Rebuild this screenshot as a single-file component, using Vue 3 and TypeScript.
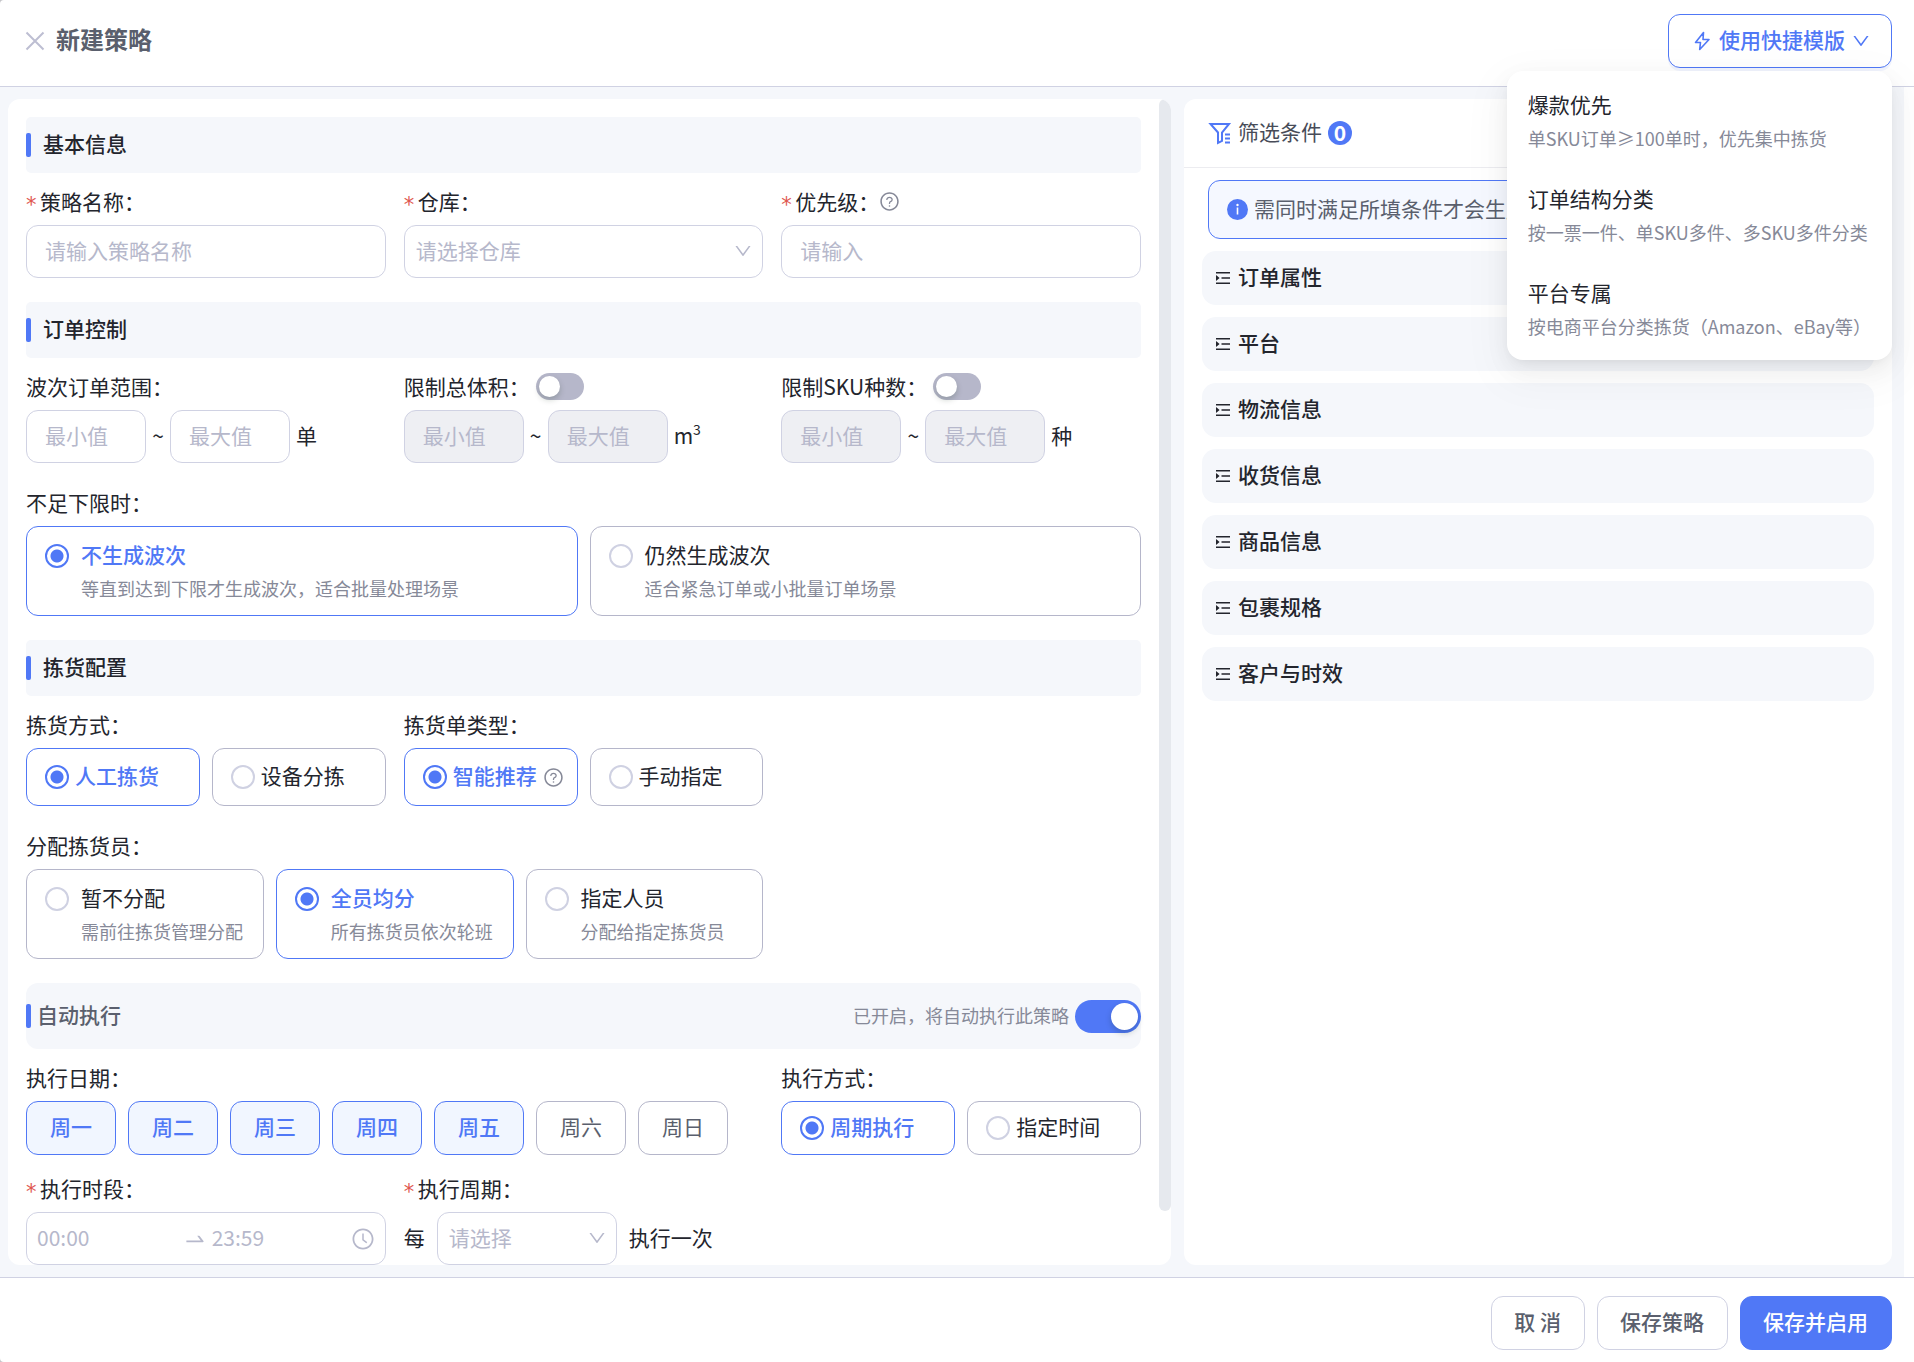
<script setup lang="ts">
import { ref } from 'vue'

interface Choice {
  value: string
  title: string
  desc?: string
  hint?: boolean
}

const shortfall = ref('skip')
const shortfallOptions: Choice[] = [
  { value: 'skip', title: '不生成波次', desc: '等直到达到下限才生成波次，适合批量处理场景' },
  { value: 'still', title: '仍然生成波次', desc: '适合紧急订单或小批量订单场景' },
]

const pickMode = ref('manual')
const pickModes: Choice[] = [
  { value: 'manual', title: '人工拣货' },
  { value: 'device', title: '设备分拣' },
]

const listType = ref('smart')
const listTypes: Choice[] = [
  { value: 'smart', title: '智能推荐', hint: true },
  { value: 'custom', title: '手动指定' },
]

const assign = ref('all')
const assignOptions: Choice[] = [
  { value: 'none', title: '暂不分配', desc: '需前往拣货管理分配' },
  { value: 'all', title: '全员均分', desc: '所有拣货员依次轮班' },
  { value: 'some', title: '指定人员', desc: '分配给指定拣货员' },
]

const runMode = ref('cycle')
const runModes: Choice[] = [
  { value: 'cycle', title: '周期执行' },
  { value: 'time', title: '指定时间' },
]

const limitVolume = ref(false)
const limitSku = ref(false)
const autoRun = ref(true)

const days = ref([
  { name: '周一', on: true },
  { name: '周二', on: true },
  { name: '周三', on: true },
  { name: '周四', on: true },
  { name: '周五', on: true },
  { name: '周六', on: false },
  { name: '周日', on: false },
])

const templates = [
  { title: '爆款优先', desc: '单SKU订单≥100单时，优先集中拣货' },
  { title: '订单结构分类', desc: '按一票一件、单SKU多件、多SKU多件分类' },
  { title: '平台专属', desc: '按电商平台分类拣货（Amazon、eBay等）' },
]
const menuOpen = ref(true)

const filters = ['订单属性', '平台', '物流信息', '收货信息', '商品信息', '包裹规格', '客户与时效']

const chevron =
  'M884 256h-75c-5.1 0-9.9 2.5-12.9 6.6L512 654.2 227.9 262.6c-3-4.1-7.8-6.6-12.9-6.6h-75c-6.5 0-10.3 7.4-6.5 12.7l352.6 486.1c12.8 17.6 39 17.6 51.7 0l352.6-486.1c3.9-5.3.1-12.7-6.4-12.7z'
const ring =
  'M512 64C264.6 64 64 264.6 64 512s200.6 448 448 448 448-200.6 448-448S759.4 64 512 64zm0 820c-205.4 0-372-166.6-372-372s166.6-372 372-372 372 166.6 372 372-166.6 372-372 372z'
const question =
  'M623.6 316.7C593.6 290.4 554 276 512 276s-81.6 14.5-111.6 40.7C369.2 344 352 380.7 352 420v7.6c0 4.4 3.6 8 8 8h48c4.4 0 8-3.6 8-8V420c0-44.1 43.1-80 96-80s96 35.9 96 80c0 31.1-22 59.6-56.1 72.7-21.2 8.1-39.2 22.3-52.1 40.9-13.1 19-19.9 41.8-19.9 64.9V620c0 4.4 3.6 8 8 8h48c4.4 0 8-3.6 8-8v-22.7a48.3 48.3 0 0130.9-44.8c59-22.7 97.1-74.7 97.1-132.5.1-39.3-17.1-76-48.3-103.3zM472 732a40 40 0 1080 0 40 40 0 10-80 0z'
const hands =
  'M686.7 638.6L544.1 535.5V288c0-4.4-3.6-8-8-8H488c-4.4 0-8 3.6-8 8v275.4c0 2.6 1.2 5 3.3 6.5l165.4 120.6c3.6 2.6 8.6 1.8 11.2-1.7l28.6-39c2.6-3.7 1.8-8.7-1.8-11.2z'
const swap =
  'M873.1 596.2l-164-208A32 32 0 00684 376h-64.8c-6.7 0-10.4 7.7-6.3 13l144.3 183H152c-4.4 0-8 3.6-8 8v60c0 4.4 3.6 8 8 8h695.9c26.8 0 41.7-30.8 25.2-51.8z'
</script>

<template>
  <div class="drawer">
    <header class="top">
      <button class="close" type="button" aria-label="关闭">
        <svg width="20" height="20" viewBox="0 0 20 20" fill="none" stroke="currentColor" stroke-width="2">
          <path d="M1.5 1.5l17 17M18.5 1.5l-17 17" />
        </svg>
      </button>
      <h1>新建策略</h1>
      <div class="quick">
        <button class="quick-btn" type="button" :aria-expanded="menuOpen" @click="menuOpen = !menuOpen">
          <svg width="18" height="20" viewBox="0 0 18 20" fill="none" stroke="currentColor" stroke-width="1.6" stroke-linejoin="round">
            <path d="M10.5 1.5L2.5 11.5h5l-.8 7L16 8.5h-6z" />
          </svg>
          <span>使用快捷模版</span>
          <svg class="chev" viewBox="0 0 1024 1024" fill="currentColor"><path :d="chevron" /></svg>
        </button>
        <div v-if="menuOpen" class="menu" role="menu">
          <button v-for="t in templates" :key="t.title" type="button" role="menuitem">
            <span class="menu-title">{{ t.title }}</span>
            <span class="menu-desc">{{ t.desc }}</span>
          </button>
        </div>
      </div>
    </header>

    <main class="body">
      <section class="panel left">
        <form class="form" @submit.prevent>
          <h2 class="bar">基本信息</h2>
          <div class="grid">
            <div class="field">
              <label class="label" for="name"><i>*</i>策略名称：</label>
              <input id="name" class="text" placeholder="请输入策略名称" />
            </div>
            <div class="field">
              <label class="label" for="house"><i>*</i>仓库：</label>
              <div class="select">
                <select id="house"><option value="">请选择仓库</option></select>
                <svg class="chev" viewBox="0 0 1024 1024" fill="currentColor"><path :d="chevron" /></svg>
              </div>
            </div>
            <div class="field">
              <label class="label" for="prio">
                <i>*</i>优先级：
                <svg class="hint" viewBox="0 0 1024 1024" fill="currentColor"><path :d="ring" /><path :d="question" /></svg>
              </label>
              <input id="prio" class="text" placeholder="请输入" />
            </div>
          </div>

          <h2 class="bar next">订单控制</h2>
          <div class="grid">
            <div class="field">
              <span class="label">波次订单范围：</span>
              <div class="range">
                <input class="text" placeholder="最小值" aria-label="波次订单最小值" />
                <span class="tilde">~</span>
                <input class="text" placeholder="最大值" aria-label="波次订单最大值" />
                <span class="unit">单</span>
              </div>
            </div>
            <div class="field">
              <label class="label">限制总体积：<input v-model="limitVolume" class="switch" type="checkbox" role="switch" /></label>
              <div class="range">
                <input class="text" placeholder="最小值" aria-label="体积最小值" :disabled="!limitVolume" />
                <span class="tilde">~</span>
                <input class="text" placeholder="最大值" aria-label="体积最大值" :disabled="!limitVolume" />
                <span class="unit">m<sup>3</sup></span>
              </div>
            </div>
            <div class="field">
              <label class="label">限制SKU种数：<input v-model="limitSku" class="switch" type="checkbox" role="switch" /></label>
              <div class="range">
                <input class="text" placeholder="最小值" aria-label="SKU种数最小值" :disabled="!limitSku" />
                <span class="tilde">~</span>
                <input class="text" placeholder="最大值" aria-label="SKU种数最大值" :disabled="!limitSku" />
                <span class="unit">种</span>
              </div>
            </div>
          </div>

          <div class="field next">
            <span class="label">不足下限时：</span>
            <div class="cards">
              <label v-for="o in shortfallOptions" :key="o.value" class="card tall" :class="{ on: shortfall === o.value }">
                <input v-model="shortfall" type="radio" name="shortfall" :value="o.value" />
                <span class="words"><b>{{ o.title }}</b><small>{{ o.desc }}</small></span>
              </label>
            </div>
          </div>

          <h2 class="bar next">拣货配置</h2>
          <div class="grid">
            <div class="field">
              <span class="label">拣货方式：</span>
              <div class="cards">
                <label v-for="o in pickModes" :key="o.value" class="card" :class="{ on: pickMode === o.value }">
                  <input v-model="pickMode" type="radio" name="pickMode" :value="o.value" />
                  <b>{{ o.title }}</b>
                </label>
              </div>
            </div>
            <div class="field">
              <span class="label">拣货单类型：</span>
              <div class="cards">
                <label v-for="o in listTypes" :key="o.value" class="card" :class="{ on: listType === o.value }">
                  <input v-model="listType" type="radio" name="listType" :value="o.value" />
                  <b>{{ o.title }}</b>
                  <svg v-if="o.hint" class="hint" viewBox="0 0 1024 1024" fill="currentColor"><path :d="ring" /><path :d="question" /></svg>
                </label>
              </div>
            </div>
          </div>

          <div class="grid next">
            <div class="field double">
              <span class="label">分配拣货员：</span>
              <div class="cards">
                <label v-for="o in assignOptions" :key="o.value" class="card tall" :class="{ on: assign === o.value }">
                  <input v-model="assign" type="radio" name="assign" :value="o.value" />
                  <span class="words"><b>{{ o.title }}</b><small>{{ o.desc }}</small></span>
                </label>
              </div>
            </div>
          </div>

          <div class="auto next">
            <h2>自动执行</h2>
            <label class="auto-state">
              <span>已开启，将自动执行此策略</span>
              <input v-model="autoRun" class="switch large" type="checkbox" role="switch" />
            </label>
          </div>
          <div class="grid">
            <div class="field double">
              <span class="label">执行日期：</span>
              <div class="days">
                <button
                  v-for="d in days"
                  :key="d.name"
                  type="button"
                  :class="{ on: d.on }"
                  :aria-pressed="d.on"
                  @click="d.on = !d.on"
                >{{ d.name }}</button>
              </div>
            </div>
            <div class="field">
              <span class="label">执行方式：</span>
              <div class="cards">
                <label v-for="o in runModes" :key="o.value" class="card low" :class="{ on: runMode === o.value }">
                  <input v-model="runMode" type="radio" name="runMode" :value="o.value" />
                  <b>{{ o.title }}</b>
                </label>
              </div>
            </div>
          </div>

          <div class="grid last">
            <div class="field">
              <label class="label" for="start"><i>*</i>执行时段：</label>
              <div class="times">
                <input id="start" placeholder="00:00" />
                <svg width="24" height="24" viewBox="0 0 1024 1024" fill="currentColor"><path :d="swap" /></svg>
                <input class="end" placeholder="23:59" aria-label="结束时间" />
                <svg width="24" height="24" viewBox="0 0 1024 1024" fill="currentColor"><path :d="ring" /><path :d="hands" /></svg>
              </div>
            </div>
            <div class="field">
              <label class="label" for="cycle"><i>*</i>执行周期：</label>
              <div class="cycle">
                <span>每</span>
                <div class="select">
                  <select id="cycle"><option value="">请选择</option></select>
                  <svg class="chev" viewBox="0 0 1024 1024" fill="currentColor"><path :d="chevron" /></svg>
                </div>
                <span>执行一次</span>
              </div>
            </div>
          </div>
        </form>
        <div class="track"><div class="thumb"></div></div>
      </section>

      <aside class="panel right">
        <div class="filter-head">
          <svg width="24" height="24" viewBox="0 0 24 24" fill="none" stroke="currentColor" stroke-width="2">
            <path d="M2.5 3h18.5L14 11.5V20l-4 2V11.5z" />
            <path d="M17 13.5h5M17 17.5h5M17 21.5h5" />
          </svg>
          <h2>筛选条件</h2>
          <span class="count">0</span>
        </div>
        <div class="notice">
          <svg width="21" height="21" viewBox="0 0 21 21">
            <circle cx="10.5" cy="10.5" r="10.5" fill="#5078f6" />
            <circle cx="10.5" cy="6" r="1.2" fill="#fff" />
            <path d="M10.5 8.6v7" stroke="#fff" stroke-width="1.6" />
          </svg>
          <span>需同时满足所填条件才会生成波次</span>
        </div>
        <ul class="filters">
          <li v-for="f in filters" :key="f">
            <button type="button">
              <svg width="14" height="14" viewBox="0 0 14 14" fill="currentColor">
                <path d="M0 1h14v1.5H0zM5.5 6.3H14v1.5H5.5zM0 11.5h14V13H0zM0 4v6l3.6-3z" />
              </svg>
              <span>{{ f }}</span>
            </button>
          </li>
        </ul>
      </aside>
    </main>

    <footer class="actions">
      <button type="button">取 消</button>
      <button type="button">保存策略</button>
      <button class="primary" type="button">保存并启用</button>
    </footer>
  </div>
</template>

<style>
body {
  background: #c4c4c8;
}
</style>

<style scoped>
* {
  box-sizing: border-box;
}
.drawer {
  --blue: #5078f6;
  --line: #d0d2e3;
  --edge: #b5b6ca;
  --ghost: #b6b8cb;
  --grey: #5a5f6d;
  --soft: #f5f7fb;
  display: flex;
  flex-direction: column;
  height: 100vh;
  overflow: hidden;
  border-radius: 4px 0 0 4px;
  background: #fff;
  color: #23252d;
  font-family: 'Noto Sans CJK SC', 'Noto Sans', sans-serif;
  font-size: 21px;
  line-height: 32px;
}
button,
input,
select {
  margin: 0;
  font: inherit;
  color: inherit;
}
button {
  cursor: pointer;
}
h1,
h2 {
  margin: 0;
}
svg {
  flex: none;
  display: block;
}
.chev {
  width: 20px;
  height: 20px;
}
.hint {
  width: 21px;
  height: 21px;
  color: #868998;
}

/* the CJK face sits low in its line box, so single-line texts are lifted */
h1,
.quick-btn span,
.card b,
.auto h2,
.tilde,
.unit,
.cycle > span,
.filter-head h2,
.notice span,
.filters span {
  padding-bottom: 4px;
}
.auto-state span {
  padding-bottom: 2px;
}

.top {
  display: flex;
  align-items: center;
  height: 87px;
  flex: none;
  padding: 0 22px 4px 25px;
  border-bottom: 1px solid var(--line);
}
.close {
  padding: 0;
  border: 0;
  background: none;
  color: #bdbed2;
}
h1 {
  margin-left: 11px;
  font-size: 24px;
  font-weight: 600;
  color: var(--grey);
}
.quick {
  position: relative;
  margin-left: auto;
}
.quick-btn {
  display: flex;
  align-items: center;
  gap: 8px;
  height: 54px;
  padding: 0 20px 0 24px;
  border: 1px solid var(--blue);
  border-radius: 12px;
  background: #fff;
  color: var(--blue);
  font-weight: 500;
  box-shadow: 0 3px 0 rgba(80, 120, 246, 0.08);
}
.quick-btn .chev {
  margin-left: -2px;
}
.menu {
  position: absolute;
  z-index: 5;
  top: 57px;
  right: 0;
  display: flex;
  flex-direction: column;
  gap: 26px;
  padding: 16px 21px 17px;
  border-radius: 16px;
  background: #fff;
  box-shadow: 0 9px 24px rgba(0, 0, 0, 0.06), 0 4px 12px -6px rgba(0, 0, 0, 0.1), 0 14px 42px 12px rgba(0, 0, 0, 0.03);
}
.menu button {
  display: flex;
  flex-direction: column;
  padding: 0;
  border: 0;
  background: none;
  text-align: left;
  white-space: nowrap;
}
.menu-title,
.menu-desc {
  line-height: 34px;
}
.menu-desc {
  font-size: 18px;
  color: #868998;
}

.body {
  flex: 1;
  min-height: 0;
  display: grid;
  grid-template-columns: 1163fr 708fr;
  grid-template-rows: 100%;
  gap: 13px;
  margin-right: 10px;
  padding: 12px 12px 12px 8px;
  background: var(--soft);
}
.panel {
  border-radius: 12px;
  background: #fff;
  overflow: hidden;
}
.left {
  display: flex;
}
.form {
  flex: 1;
  min-width: 0;
  padding: 18px 18px 0;
}
.track {
  width: 12px;
}
.thumb {
  height: 95.4%;
  border-radius: 6px;
  background: #e6e9ee;
}

.bar {
  display: flex;
  align-items: center;
  height: 56px;
  padding-bottom: 4px;
  border-radius: 5px;
  background: var(--soft);
  font-size: 21px;
  font-weight: 500;
}
.bar::before,
.auto::before {
  content: '';
  width: 5px;
  height: 24px;
  margin-right: 12px;
  border-radius: 2px;
  background: var(--blue);
}
.bar::before {
  margin-top: 4px;
}
.next {
  margin-top: 24px;
}
.last {
  margin-top: 5px;
}
.grid {
  display: grid;
  grid-template-columns: repeat(3, minmax(0, 1fr));
  gap: 18px;
}
.double {
  grid-column: span 2;
}
.label {
  display: flex;
  align-items: center;
  height: 32px;
  margin-bottom: 7px;
  padding-bottom: 3px;
}
.bar + .grid,
.auto + .grid,
.last {
  padding-top: 13px;
}
.label i {
  width: 14px;
  padding-top: 8px;
  color: #e0574f;
  font-family: 'DejaVu Sans', sans-serif;
  font-style: normal;
}
.label .switch {
  margin-top: 2px;
  margin-left: 6px;
}
.label .hint {
  margin-top: 2px;
}
.text,
.select select,
.times {
  display: block;
  width: 100%;
  height: 53px;
  border: 1px solid var(--line);
  border-radius: 12px;
  background: #fff;
}
.text {
  padding: 0 18px 4px;
}
.text::placeholder,
.times input::placeholder {
  color: var(--ghost);
  opacity: 1;
}
.text:disabled {
  background: #eeeff3;
}
.select {
  position: relative;
}
.select select {
  appearance: none;
  padding: 0 40px 4px 11px;
  color: var(--ghost);
}
.select .chev {
  position: absolute;
  top: 16px;
  right: 10px;
  color: var(--ghost);
  pointer-events: none;
}
.range {
  display: flex;
  align-items: center;
}
.range .text {
  width: 120px;
}
.tilde {
  width: 24px;
  text-align: center;
}
.unit {
  margin-left: 6px;
}
sup {
  font-size: 14px;
  line-height: 0;
  vertical-align: 9px;
}

.switch {
  appearance: none;
  width: 48px;
  height: 27px;
  padding: 3px;
  border-radius: 17px;
  background: #b6b7ca;
}
.switch::before {
  content: '';
  display: block;
  width: 21px;
  height: 21px;
  border-radius: 50%;
  background: #fff;
  box-shadow: 0 3px 6px rgba(0, 35, 11, 0.2);
}
.switch.large {
  width: 66px;
  height: 33px;
}
.switch.large::before {
  width: 27px;
  height: 27px;
}
.switch:checked {
  background: var(--blue);
}
.switch:checked::before {
  margin-left: auto;
}

.cards {
  display: flex;
  gap: 12px;
}
.card {
  flex: 1;
  display: flex;
  align-items: center;
  gap: 6px;
  min-width: 0;
  height: 58px;
  padding: 0 10px 0 18px;
  border: 1px solid var(--edge);
  border-radius: 12px;
  white-space: nowrap;
}
.card.low {
  height: 54px;
}
.card.tall {
  align-items: flex-start;
  gap: 12px;
  height: 90px;
  padding-top: 11px;
}
.card.tall input {
  margin-top: 6px;
}
.card input {
  appearance: none;
  flex: none;
  width: 24px;
  height: 24px;
  border: 2px solid #cfd1e2;
  border-radius: 50%;
}
.card input:checked {
  border-color: var(--blue);
  background: radial-gradient(circle, var(--blue) 6px, transparent 7px);
}
.card b {
  font-weight: 400;
}
.card.on {
  border-color: var(--blue);
}
.card.on b {
  color: var(--blue);
  font-weight: 500;
}
.words {
  display: flex;
  flex-direction: column;
}
.words small {
  font-size: 18px;
  color: #868998;
  line-height: 28px;
}

.auto {
  display: flex;
  align-items: center;
  height: 66px;
  border-radius: 12px;
  background: var(--soft);
}
.auto::before {
  margin-right: 6px;
}
.auto h2 {
  font-size: 21px;
  font-weight: 500;
  color: var(--grey);
}
.auto-state {
  display: flex;
  align-items: center;
  gap: 6px;
  margin-left: auto;
  font-size: 18px;
  color: #868998;
}
.days {
  display: flex;
  gap: 12px;
}
.days button {
  width: 90px;
  height: 54px;
  padding: 0 0 4px;
  border: 1px solid var(--edge);
  border-radius: 12px;
  background: #fff;
  color: var(--grey);
}
.days .on {
  border-color: var(--blue);
  background: #f1f6ff;
  color: var(--blue);
  font-weight: 500;
}
.times {
  display: flex;
  align-items: center;
  padding: 0 10px;
  color: var(--ghost);
}
.times input {
  flex: 1;
  min-width: 0;
  padding: 0 0 4px;
  border: 0;
  background: none;
  outline: 0;
}
.times .end {
  flex: 0 0 139px;
  margin-left: 5px;
}
.cycle {
  display: flex;
  align-items: center;
  gap: 12px;
}
.cycle .select {
  width: 180px;
}

.filter-head {
  display: flex;
  align-items: center;
  height: 69px;
  padding: 0 24px;
  border-bottom: 1px solid #ececf0;
  color: var(--blue);
}
.filter-head h2 {
  margin: 0 6px;
  font-size: 21px;
  font-weight: 400;
  color: #484c58;
}
.count {
  width: 24px;
  height: 24px;
  border-radius: 50%;
  background: var(--blue);
  color: #fff;
  font-weight: 600;
  line-height: 22px;
  text-align: center;
}
.notice {
  display: flex;
  align-items: center;
  gap: 6px;
  height: 59px;
  margin: 12px 24px;
  padding: 0 18px;
  border: 1px solid var(--blue);
  border-radius: 12px;
  background: #f5f8ff;
  color: var(--grey);
}
.filters {
  display: flex;
  flex-direction: column;
  gap: 12px;
  margin: 0 18px;
  padding: 0;
  list-style: none;
}
.filters button {
  display: flex;
  align-items: center;
  gap: 8px;
  width: 100%;
  height: 54px;
  padding: 0 14px;
  border: 0;
  border-radius: 14px;
  background: var(--soft);
  font-weight: 500;
}

.actions {
  flex: none;
  display: flex;
  justify-content: flex-end;
  gap: 12px;
  padding: 18px 22px 12px;
  border-top: 1px solid var(--line);
}
.actions button {
  height: 54px;
  padding: 0 23px 4px 22px;
  border: 1px solid var(--line);
  border-radius: 12px;
  background: #fff;
  color: var(--grey);
  font-weight: 500;
}
.actions .primary {
  border-color: var(--blue);
  background: var(--blue);
  color: #fff;
}
</style>
